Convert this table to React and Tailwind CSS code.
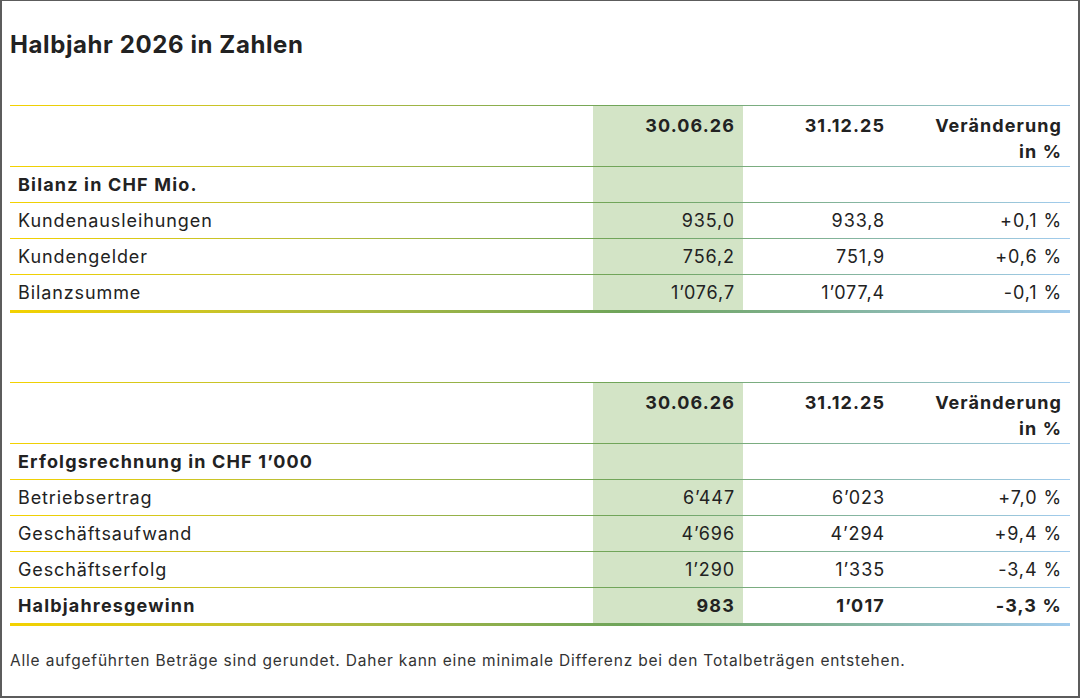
const lineGradient =
  "bg-[linear-gradient(to_right,#f4d200_0%,#b3bc3c_30%,#6ea45a_58%,#7fb08e_75%,#a2ccee_100%)]";

const bilanz = [
  ["Kundenausleihungen", "935,0", "933,8", "+0,1 %"],
  ["Kundengelder", "756,2", "751,9", "+0,6 %"],
  ["Bilanzsumme", "1’076,7", "1’077,4", "-0,1 %"],
];

const erfolg = [
  ["Betriebsertrag", "6’447", "6’023", "+7,0 %"],
  ["Geschäftsaufwand", "4’696", "4’294", "+9,4 %"],
  ["Geschäftserfolg", "1’290", "1’335", "-3,4 %"],
];

const cols = "grid grid-cols-[583px_150px_150px_177px]";

function Line({ thick }) {
  return <div className={`${thick ? "h-[3px]" : "h-px"} w-full ${lineGradient}`} />;
}

function Row({ cells, bold }) {
  return (
    <div className={`${cols} h-[35px] items-stretch ${bold ? "font-bold tracking-[0.065em]" : ""}`}>
      <div className="flex items-center px-2">{cells[0]}</div>
      <div className="flex items-center justify-end bg-[#d3e4c6] px-2">{cells[1]}</div>
      <div className="flex items-center justify-end px-2">{cells[2]}</div>
      <div className="flex items-center justify-end px-2">{cells[3]}</div>
    </div>
  );
}

function Table({ title, rows, total }) {
  return (
    <div className="flex flex-col">
      <Line />
      <div className={`${cols} h-[60px] font-bold tracking-[0.06em]`}>
        <div />
        <div className="bg-[#d3e4c6] px-2 pt-[7px] text-right leading-[26px]">30.06.26</div>
        <div className="px-2 pt-[7px] text-right leading-[26px]">31.12.25</div>
        <div className="px-2 pt-[7px] text-right leading-[26px]">
          Veränderung
          <br />
          in %
        </div>
      </div>
      <Line />
      <Row cells={[title, "", "", ""]} bold />
      {rows.map((r) => (
        <div key={r[0]}>
          <Line />
          <Row cells={r} />
        </div>
      ))}
      {total && (
        <>
          <Line />
          <Row cells={total} bold />
        </>
      )}
      <Line thick />
    </div>
  );
}

export default function App() {
  return (
    <div
      className="box-border h-[698px] w-[1080px] border-x-2 border-t border-b-2 border-[#5c5c5c] bg-white px-2 text-[18px] tracking-[0.05em] text-[#222]"
      style={{ fontFamily: "Inter, 'Liberation Sans', sans-serif" }}
    >
      <h1 className="pt-[30px] text-[24px] font-bold leading-[28px] tracking-[0.025em]">
        Halbjahr 2026 in Zahlen
      </h1>
      <div className="mt-[46px]">
        <Table title="Bilanz in CHF Mio." rows={bilanz} />
      </div>
      <div className="mt-[69px]">
        <Table
          title="Erfolgsrechnung in CHF 1’000"
          rows={erfolg}
          total={["Halbjahresgewinn", "983", "1’017", "-3,3 %"]}
        />
      </div>
      <p className="mt-[25px] text-[15.5px] leading-[20px] tracking-[0.052em] text-[#333]">
        Alle aufgeführten Beträge sind gerundet. Daher kann eine minimale Differenz bei den Totalbeträgen entstehen.
      </p>
    </div>
  );
}
